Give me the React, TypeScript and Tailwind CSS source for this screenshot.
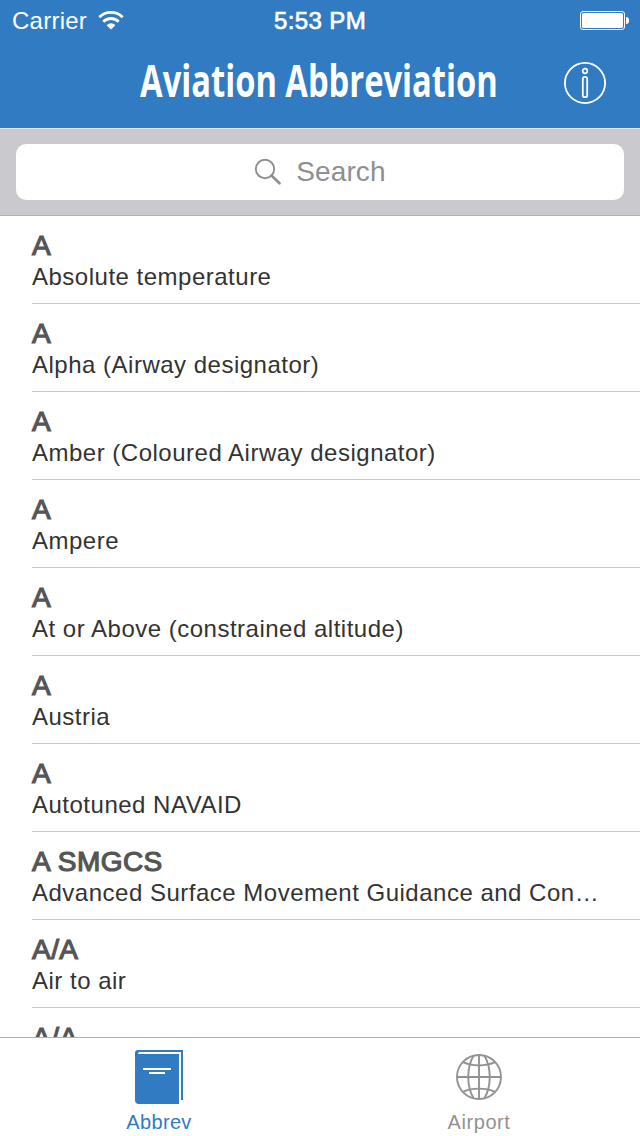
interface Abbreviation {
  code: string;
  meaning: string;
}

const ABBREVIATIONS: Abbreviation[] = [
  { code: "A", meaning: "Absolute temperature" },
  { code: "A", meaning: "Alpha (Airway designator)" },
  { code: "A", meaning: "Amber (Coloured Airway designator)" },
  { code: "A", meaning: "Ampere" },
  { code: "A", meaning: "At or Above (constrained altitude)" },
  { code: "A", meaning: "Austria" },
  { code: "A", meaning: "Autotuned NAVAID" },
  { code: "A SMGCS", meaning: "Advanced Surface Movement Guidance and Con…" },
  { code: "A/A", meaning: "Air to air" },
  { code: "A/A", meaning: "" },
];

function WifiIcon() {
  return (
    <svg width="26" height="20" viewBox="0 0 26 20" fill="none" stroke="white" strokeWidth="2.8">
      <path d="M1.3 7.2a16.5 16.5 0 0 1 23.4 0" />
      <path d="M5.3 11.7a10.9 10.9 0 0 1 15.4 0" />
      <path d="M13 19.5 8.6 15.2a6.2 6.2 0 0 1 8.8 0Z" fill="white" stroke="none" />
    </svg>
  );
}

function BatteryIcon() {
  return (
    <svg width="50" height="20" viewBox="0 0 50 20" fill="none">
      <rect x="0.5" y="1.5" width="44" height="18" rx="2.5" stroke="white" />
      <rect x="2" y="3" width="41" height="15" rx="1.5" fill="white" />
      <path d="M46 7a3 3 0 0 1 3 3v1a3 3 0 0 1-3 3Z" fill="white" />
    </svg>
  );
}

function InfoIcon() {
  return (
    <svg width="42" height="42" viewBox="0 0 42 42" fill="none" stroke="white">
      <circle cx="21" cy="21" r="20.1" strokeWidth="1.8" />
      <circle cx="21" cy="9" r="2.3" strokeWidth="1.7" />
      <rect x="18.8" y="14.8" width="4.4" height="20.4" rx="2" strokeWidth="1.8" />
    </svg>
  );
}

function SearchIcon() {
  return (
    <svg width="28" height="28" viewBox="0 0 28 28" fill="none" stroke="#8e8e93">
      <circle cx="11" cy="11" r="9.2" strokeWidth="1.9" />
      <path d="m17.5 17.5 8 7.8" strokeWidth="2.6" strokeLinecap="round" />
    </svg>
  );
}

function BookIcon() {
  return (
    <svg width="48" height="54" viewBox="0 0 48 54">
      <path
        d="M3 0H48V50H46V2H4.5a2 2 0 0 0-1.6 2H44V54H4a4 4 0 0 1-4-4V3a3 3 0 0 1 3-3Z"
        fill="#307bc1"
      />
      <path d="M8 19h28M14 23h16" stroke="white" strokeWidth="2" />
    </svg>
  );
}

function GlobeIcon() {
  return (
    <svg width="46" height="46" viewBox="0 0 46 46" fill="none" stroke="#929292" strokeWidth="1.9">
      <circle cx="23" cy="23" r="22" />
      <path d="M23 1v44M1 23h44" />
      <path d="M17.5 1.8c-7 12-7 30.4 0 42.4M28.5 1.8c7 12 7 30.4 0 42.4" />
      <path d="M7 8.2c9 4.3 23 4.3 32 0M7 37.8c9-4.3 23-4.3 32 0" />
    </svg>
  );
}

function AbbreviationRow({ code, meaning }: Abbreviation) {
  return (
    <li className="ml-8 h-[88px] shrink-0 border-b border-[#c8c7cc] pt-[14px] pr-8">
      <div className="h-[31px] text-[28px] leading-8 tracking-[0.45px] text-[#555] [-webkit-text-stroke:1.2px_#555]">
        {code}
      </div>
      <div className="text-2xl leading-8 tracking-[0.5px] whitespace-nowrap text-[#333]">
        {meaning}
      </div>
    </li>
  );
}

export default function App() {
  return (
    <div className="flex h-[1136px] w-[640px] flex-col overflow-hidden bg-white font-['Liberation_Sans',Arial,sans-serif]">
      <header className="h-32 shrink-0 bg-[#307bc1] text-white">
        <div className="grid h-10 grid-cols-3 items-center pr-[10px] pl-3 text-2xl">
          <div className="flex items-center gap-[11px]">
            <span className="pt-0.5 tracking-[0.25px]">Carrier</span>
            <WifiIcon />
          </div>
          <span className="pt-0.5 pr-0.5 text-center tracking-[0.4px] [-webkit-text-stroke:0.7px_white]">
            5:53 PM
          </span>
          <div className="flex justify-end">
            <BatteryIcon />
          </div>
        </div>
        <div className="grid h-[86px] grid-cols-[76px_1fr_76px] items-center">
          <h1 className="col-start-2 scale-x-[0.743] justify-self-center pr-0.5 pb-[6px] font-['Open_Sans','Noto_Sans',sans-serif] text-[44px] font-bold whitespace-nowrap">
            Aviation Abbreviation
          </h1>
          <button>
            <InfoIcon />
          </button>
        </div>
      </header>

      <div className="h-[88px] shrink-0 border-t border-b border-t-[#e6e6ea] border-b-[#b2b2b5] bg-[#c9c9ce] px-4 pt-[15px]">
        <div className="flex h-14 items-center justify-center gap-[14px] rounded-[10px] bg-white text-[28px] text-[#8e8e93]">
          <SearchIcon />
          <span className="tracking-[0.1px]">Search</span>
        </div>
      </div>

      <ul className="flex min-h-0 flex-1 flex-col overflow-hidden">
        {ABBREVIATIONS.map((item, i) => (
          <AbbreviationRow key={i} {...item} />
        ))}
      </ul>

      <nav className="grid h-[99px] shrink-0 grid-cols-2 border-t border-[#adadad] bg-white text-xl text-[#929292]">
        <button className="flex flex-col items-center pt-3 pr-0.5 text-[#307bc1]">
          <BookIcon />
          <span className="mt-1 tracking-[0.35px]">Abbrev</span>
        </button>
        <button className="flex flex-col items-center pt-4 pr-0.5">
          <GlobeIcon />
          <span className="mt-2 tracking-[0.55px]">Airport</span>
        </button>
      </nav>
    </div>
  );
}
